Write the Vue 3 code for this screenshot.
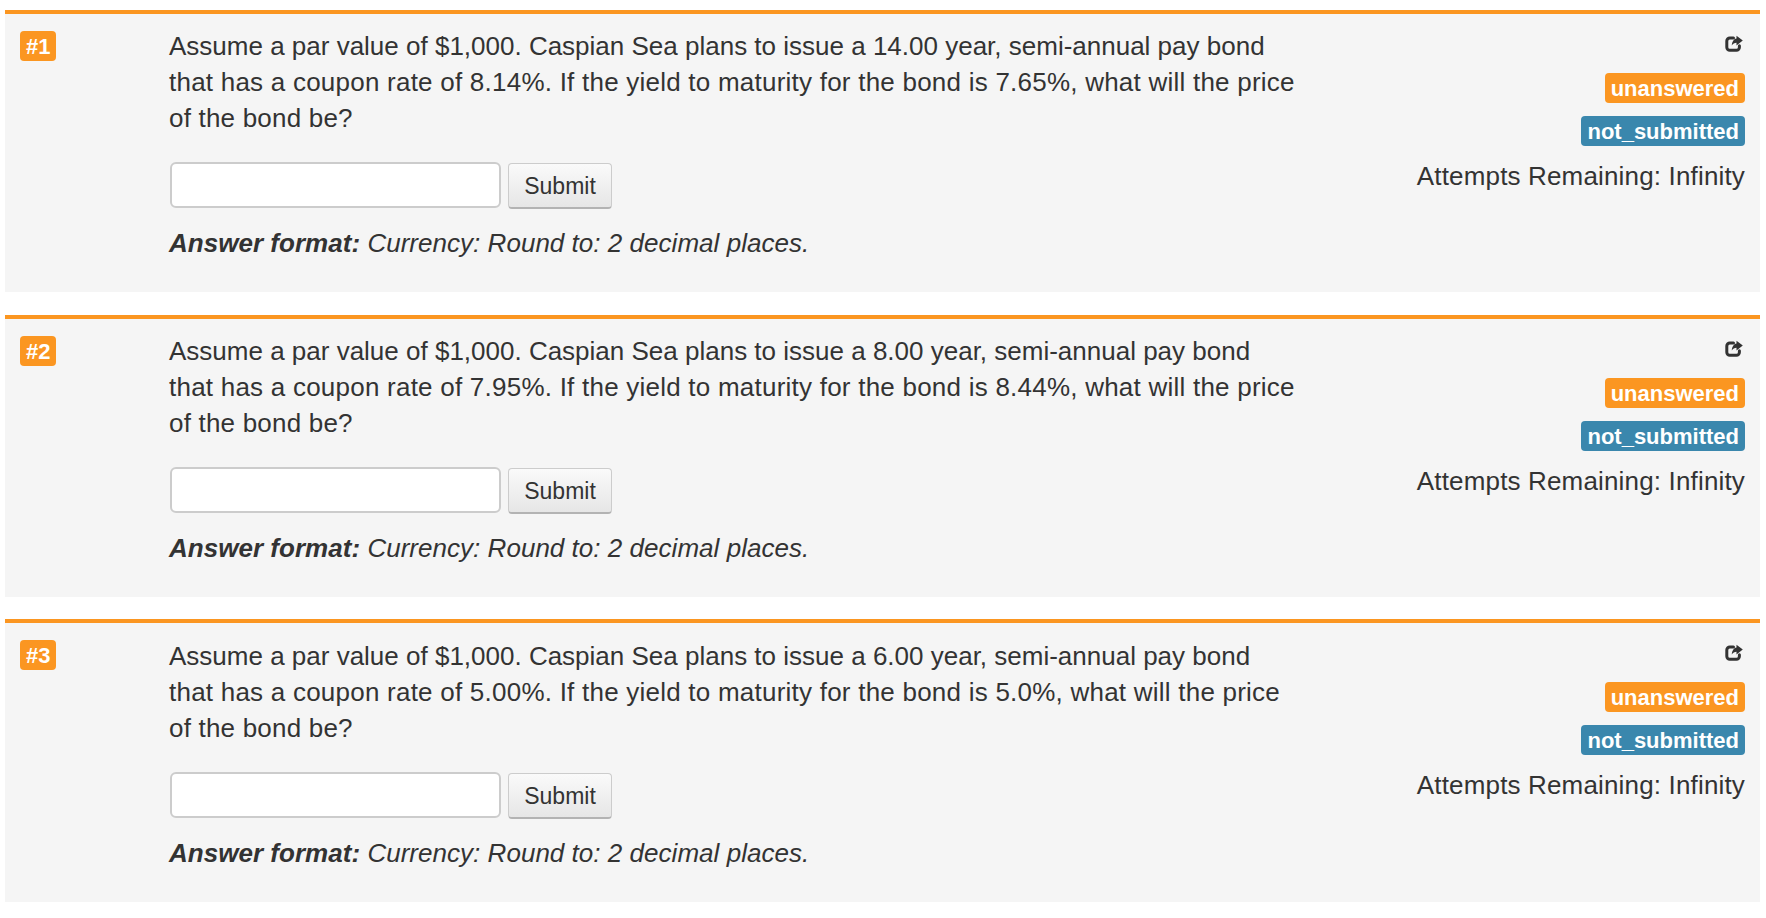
<script setup>
const items = [
  { n: 1, years: '14.00', coupon: '8.14%', ytm: '7.65%' },
  { n: 2, years: '8.00', coupon: '7.95%', ytm: '8.44%' },
  { n: 3, years: '6.00', coupon: '5.00%', ytm: '5.0%' }
]
</script>

<template>
  <div class="page">
    <section v-for="q in items" :key="q.n" class="card">
      <div class="num"><span class="tag orange">#{{ q.n }}</span></div>
      <div class="main">
        <p class="text">
          <span class="line">Assume a par value of $1,000. Caspian Sea plans to issue a {{ q.years }} year, semi-annual pay bond</span>
          <span class="line wide">that has a coupon rate of {{ q.coupon }}. If the yield to maturity for the bond is {{ q.ytm }}, what will the price</span>
          <span class="line last">of the bond be?</span>
        </p>
        <div class="form">
          <input class="field" type="text" />
          <button class="btn" type="button">Submit</button>
        </div>
        <p class="format"><b>Answer format:</b> Currency: Round to: 2 decimal places.</p>
      </div>
      <div class="side">
        <svg class="share" viewBox="0 0 18 18" width="18" height="18">
          <path d="M8.5 3H4.8A3 3 0 0 0 1.8 6v6.2a3 3 0 0 0 3 3h6.6a3 3 0 0 0 3-3v-1.4" fill="none" stroke="#333" stroke-width="3" stroke-linecap="round"/>
          <path d="M11.5 .8 17.8 5.6 11.5 10.4V7.8C9.4 7.8 8 8.6 6.8 10.6 6.9 7.2 8.6 4.2 11.5 3.6V.8Z" fill="#333"/>
        </svg>
        <span class="tag orange">unanswered</span>
        <span class="tag blue">not_submitted</span>
        <span class="attempts">Attempts Remaining: Infinity</span>
      </div>
    </section>
  </div>
</template>

<style scoped>
.page {
  padding: 9.75px 6px 0 5px;
  display: flex;
  flex-direction: column;
  gap: 22.25px;
  font-family: "Liberation Sans", Arial, sans-serif;
  color: #333;
}
.card {
  display: flex;
  height: 282.5px;
  box-sizing: border-box;
  background: #f5f5f5;
  border-top: 4px solid #fb9621;
}
.num {
  width: 164px;
  flex: none;
  padding: 17px 0 0 15px;
  box-sizing: border-box;
}
.main {
  width: 1140px;
  flex: none;
  padding-top: 14.3px;
}
.text {
  margin: 0;
  font-size: 26px;
  line-height: 36px;
}
.line {
  display: block;
  white-space: nowrap;
}
.wide {
  letter-spacing: 0.23px;
}
.last {
  letter-spacing: 0.2px;
}
.form {
  display: flex;
  align-items: flex-start;
  gap: 7px;
  margin-top: 26px;
  padding-left: 1px;
}
.field {
  width: 331px;
  height: 46px;
  box-sizing: border-box;
  background: #fff;
  border: 2px solid #ccc;
  border-radius: 6px;
  outline: none;
  padding: 0;
}
.btn {
  width: 104px;
  height: 46px;
  margin-top: 1px;
  box-sizing: border-box;
  font: 23px "Liberation Sans", Arial, sans-serif;
  color: #333;
  border: 1px solid #ccc;
  border-bottom: 2px solid #b3b3b3;
  border-radius: 4px;
  background: linear-gradient(#fafafa, #e6e6e6);
  padding: 2px 0 0;
}
.format {
  margin: 16px 0 0;
  font-size: 26px;
  line-height: 36px;
  font-style: italic;
  letter-spacing: 0.03px;
}
.side {
  flex: 1;
  display: flex;
  flex-direction: column;
  align-items: flex-end;
  padding: 21px 15px 0 0;
}
.share {
  margin-right: 2px;
}
.tag {
  display: inline-block;
  font-weight: 700;
  font-size: 22px;
  line-height: 29px;
  color: #fff;
  padding: 1px 6px 0;
  border-radius: 4px;
}
.orange { background: #fb9621; }
.blue { background: #3a87ad; }
.side .orange { margin-top: 20px; }
.side .blue { margin-top: 13px; }
.attempts {
  margin-top: 14px;
  font-size: 26px;
  line-height: 32px;
  letter-spacing: 0.16px;
}
</style>
